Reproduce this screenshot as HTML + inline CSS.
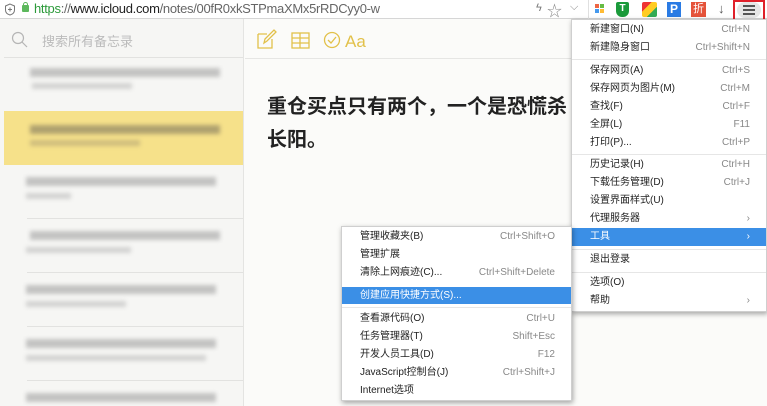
<!DOCTYPE html>
<html><head><meta charset="utf-8"><style>
*{margin:0;padding:0;box-sizing:border-box}
html,body{width:767px;height:406px;overflow:hidden}
body{position:relative;background:#fbfbf9;font-family:"Liberation Sans","Noto Sans CJK SC",sans-serif;}
.abs{position:absolute}
#bar{left:0;top:0;width:767px;height:19px;background:#fff;border-bottom:1px solid #d6d6d6}
#side{left:0;top:19px;width:244px;height:387px;background:#f6f6f4;border-right:1px solid #e4e4e2}
.note{position:absolute;left:4px;width:239px;height:54px}
.note .ln{position:absolute;left:23px;right:0;bottom:0;height:1px;background:#e2e2e0}
.bl{position:absolute;background:#a8a8a8;filter:blur(2px);opacity:.65}
.menu{background:#fff;box-shadow:1px 2px 5px rgba(0,0,0,.35);border:1px solid #cfcfcf;font-size:10px;color:#222}
.it{position:absolute;left:0;right:0;height:18px;line-height:18px}
.it .l{position:absolute;left:18px}
.it .r{position:absolute;right:16px;color:#888}
.hl{background:#3b8fe6;color:#fff}
.hl .r{color:#fff}
.sep{position:absolute;left:0;right:0;height:1px;background:#e6e6e6}
</style></head><body>
<div id="bar" class="abs">
 <svg class="abs" style="left:4px;top:3px" width="12" height="13" viewBox="0 0 12 13"><path d="M6 1L1.5 3v4c0 2.5 2 4.3 4.5 5 2.5-.7 4.5-2.5 4.5-5V3z" fill="none" stroke="#777"/><path d="M6 4.5v4M4 6.5h4" stroke="#777"/></svg>
 <div class="abs" style="left:22px;top:5px;width:7px;height:7px;background:#5cb85c;border-radius:1px"></div>
 <div class="abs" style="left:23px;top:2px;width:5px;height:5px;border:1.5px solid #5cb85c;border-bottom:none;border-radius:3px 3px 0 0"></div>
 <div class="abs" style="left:34px;top:1px;font-size:13px;letter-spacing:-.3px;line-height:16px;color:#666;white-space:nowrap"><span style="color:#2c9a3a">https</span>://<span style="color:#222">www.icloud.com</span>/notes/00fR0xkSTPmaXMx5rRDCyy0-w</div>
 <div class="abs" style="left:536px;top:2px;font-size:11px;color:#777">ϟ</div>
 <div class="abs" style="left:547px;top:0px;font-size:15px;color:#888">☆</div>
 <div class="abs" style="left:570px;top:1px;font-size:11px;color:#888">⌵</div>
 <div class="abs" style="left:588px;top:0;width:1px;height:19px;background:#e0e0e0"></div>
 <div class="abs" style="left:595px;top:4px;width:4px;height:4px;background:#e64"></div><div class="abs" style="left:600px;top:4px;width:4px;height:4px;background:#6b4"></div><div class="abs" style="left:595px;top:9px;width:4px;height:4px;background:#49e"></div><div class="abs" style="left:600px;top:9px;width:4px;height:4px;background:#fb3"></div>
 <div class="abs" style="left:616px;top:2px;width:13px;height:15px;background:#1a9a3a;border-radius:2px 2px 6px 6px;color:#fff;font-size:10px;font-weight:bold;text-align:center;line-height:14px">T</div>
 <div class="abs" style="left:642px;top:2px;width:15px;height:15px;background:linear-gradient(135deg,#e33 0 33%,#fc2 33% 66%,#3a5 66%);border-radius:2px"></div>
 <div class="abs" style="left:667px;top:2px;width:14px;height:15px;background:#2a7be4;color:#fff;font-size:12px;font-weight:bold;text-align:center;line-height:15px">P</div>
 <div class="abs" style="left:691px;top:2px;width:15px;height:15px;background:#e5533a;color:#fff;font-size:11px;text-align:center;line-height:15px">折</div>
 <div class="abs" style="left:718px;top:1px;font-size:13px;color:#555">↓</div>
 <div class="abs" style="left:733px;top:0;width:32px;height:21px;border:2px solid #e0202a"></div>
 <div class="abs" style="left:737px;top:2px;width:24px;height:16px;background:#e6e6e6;border-radius:8px"></div>
 <div class="abs" style="left:743px;top:5px;width:12px;height:2px;background:#555;box-shadow:0 4px 0 #555,0 8px 0 #555"></div>
</div>
<div id="side" class="abs">
 <div class="abs" style="left:4px;top:0;width:239px;height:39px;border-bottom:1px solid #e2e2e0"></div>
 <svg class="abs" style="left:11px;top:12px" width="17" height="17" viewBox="0 0 17 17"><circle cx="7" cy="7" r="5.5" fill="none" stroke="#b5b5b5" stroke-width="1.2"/><path d="M11 11l5 5" stroke="#b5b5b5" stroke-width="1.2"/></svg>
 <div class="abs" style="left:42px;top:12px;font-size:13px;color:#bbb">搜索所有备忘录</div>
</div>
<div class="note" style="top:58px"><div class="bl" style="left:26px;top:10px;width:190px;height:9px"></div><div class="bl" style="left:28px;top:25px;width:100px;height:6px;opacity:.45"></div><div class="ln"></div></div>
<div class="note" style="top:111px;background:#f6e18a"><div class="bl" style="left:26px;top:14px;width:190px;height:9px;background:#8a8060"></div><div class="bl" style="left:26px;top:29px;width:110px;height:6px;background:#a89a70;opacity:.5"></div></div>
<div class="note" style="top:165px"><div class="bl" style="left:22px;top:12px;width:190px;height:9px"></div><div class="bl" style="left:22px;top:28px;width:45px;height:6px;opacity:.45"></div><div class="ln"></div></div>
<div class="note" style="top:219px"><div class="bl" style="left:26px;top:12px;width:190px;height:9px"></div><div class="bl" style="left:22px;top:28px;width:105px;height:6px;opacity:.45"></div><div class="ln"></div></div>
<div class="note" style="top:273px"><div class="bl" style="left:22px;top:12px;width:190px;height:9px"></div><div class="bl" style="left:22px;top:28px;width:100px;height:6px;opacity:.45"></div><div class="ln"></div></div>
<div class="note" style="top:327px"><div class="bl" style="left:22px;top:12px;width:190px;height:9px"></div><div class="bl" style="left:22px;top:28px;width:180px;height:6px;opacity:.45"></div><div class="ln"></div></div>
<div class="note" style="top:381px;height:25px"><div class="bl" style="left:22px;top:12px;width:190px;height:9px"></div></div>
<div class="abs" style="left:245px;top:58px;width:326px;height:1px;background:#e6e6e4"></div>
<svg class="abs" style="left:256px;top:29px" width="120" height="22" viewBox="0 0 120 22" fill="none" stroke="#e2c14a" stroke-width="1.3">
 <path d="M2 5h9M2 5v14h14v-9"/><path d="M8 14l1-4 9-9 2 2-9 9z"/>
 <rect x="36" y="4" width="17" height="15"/><path d="M36 9h17M36 14h17M44 4v15"/>
 <circle cx="76" cy="11" r="7.5"/><path d="M72 11l3 3 5-6"/>
 <text x="89" y="18" font-size="17" fill="#e2c14a" stroke="none" font-family="Liberation Sans,sans-serif">Aa</text>
</svg>
<div class="abs" style="left:267px;top:88px;font-size:20px;font-weight:bold;line-height:33px;color:#222;white-space:nowrap;font-family:'Noto Sans CJK SC',sans-serif">重仓买点只有两个，一个是恐慌杀<br>长阳。</div>

<div class="menu abs" style="left:571px;top:19px;width:196px;height:293px">
 <div class="it" style="top:1px"><span class="l">新建窗口(N)</span><span class="r">Ctrl+N</span></div>
 <div class="it" style="top:19px"><span class="l">新建隐身窗口</span><span class="r">Ctrl+Shift+N</span></div>
 <div class="sep" style="top:39px"></div>
 <div class="it" style="top:42px"><span class="l">保存网页(A)</span><span class="r">Ctrl+S</span></div>
 <div class="it" style="top:60px"><span class="l">保存网页为图片(M)</span><span class="r">Ctrl+M</span></div>
 <div class="it" style="top:78px"><span class="l">查找(F)</span><span class="r">Ctrl+F</span></div>
 <div class="it" style="top:96px"><span class="l">全屏(L)</span><span class="r">F11</span></div>
 <div class="it" style="top:114px"><span class="l">打印(P)...</span><span class="r">Ctrl+P</span></div>
 <div class="sep" style="top:134px"></div>
 <div class="it" style="top:136px"><span class="l">历史记录(H)</span><span class="r">Ctrl+H</span></div>
 <div class="it" style="top:154px"><span class="l">下载任务管理(D)</span><span class="r">Ctrl+J</span></div>
 <div class="it" style="top:172px"><span class="l">设置界面样式(U)</span></div>
 <div class="it" style="top:190px"><span class="l">代理服务器</span><span class="r">›</span></div>
 <div class="it hl" style="top:208px"><span class="l">工具</span><span class="r">›</span></div>
 <div class="sep" style="top:229px"></div>
 <div class="it" style="top:231px"><span class="l">退出登录</span></div>
 <div class="sep" style="top:252px"></div>
 <div class="it" style="top:254px"><span class="l">选项(O)</span></div>
 <div class="it" style="top:272px"><span class="l">帮助</span><span class="r">›</span></div>
</div>

<div class="menu abs" style="left:341px;top:226px;width:231px;height:175px">
 <div class="it" style="top:1px"><span class="l">管理收藏夹(B)</span><span class="r">Ctrl+Shift+O</span></div>
 <div class="it" style="top:19px"><span class="l">管理扩展</span></div>
 <div class="it" style="top:37px"><span class="l">清除上网痕迹(C)...</span><span class="r">Ctrl+Shift+Delete</span></div>
 <div class="it hl" style="top:60px;height:17px;line-height:17px"><span class="l">创建应用快捷方式(S)...</span></div>
 <div class="sep" style="top:80px"></div>
 <div class="it" style="top:83px"><span class="l">查看源代码(O)</span><span class="r">Ctrl+U</span></div>
 <div class="it" style="top:101px"><span class="l">任务管理器(T)</span><span class="r">Shift+Esc</span></div>
 <div class="it" style="top:119px"><span class="l">开发人员工具(D)</span><span class="r">F12</span></div>
 <div class="it" style="top:137px"><span class="l">JavaScript控制台(J)</span><span class="r">Ctrl+Shift+J</span></div>
 <div class="it" style="top:155px"><span class="l">Internet选项</span></div>
</div>
</body></html>
